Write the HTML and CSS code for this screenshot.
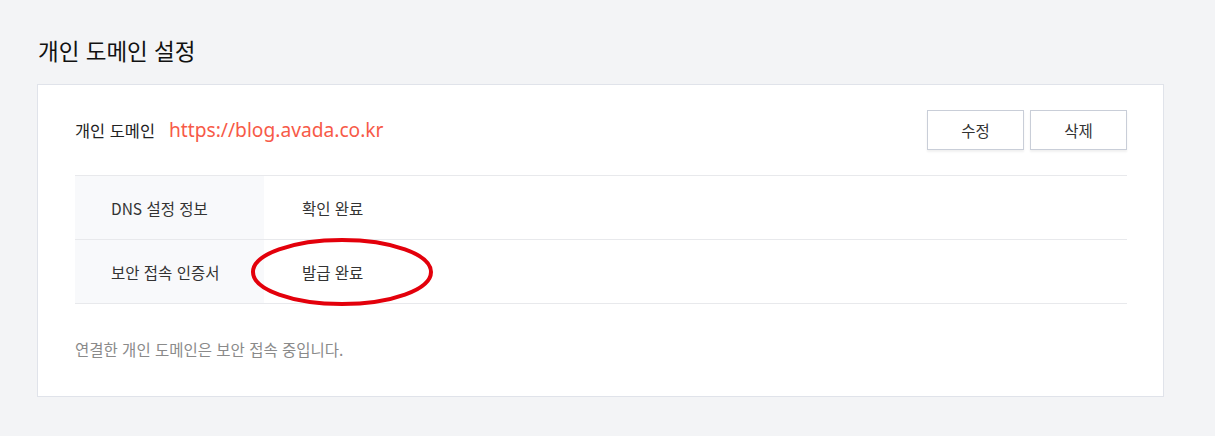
FILE: index.html
```html
<!DOCTYPE html>
<html lang="ko">
<head>
<meta charset="utf-8">
<link rel="stylesheet" href="styles.css">
</head>
<body>
<div class="page">
  <h1 class="title">개인 도메인 설정</h1>
  <section class="card">
    <div class="card-head">
      <div class="domain">
        <span class="domain-label">개인 도메인</span>
        <span class="domain-url">https://blog.avada.co.kr</span>
      </div>
      <div class="actions">
        <button class="btn">수정</button>
        <button class="btn">삭제</button>
      </div>
    </div>
    <div class="info">
      <div class="row">
        <div class="cell-label">DNS 설정 정보</div>
        <div class="cell-value">확인 완료</div>
      </div>
      <div class="row">
        <div class="cell-label">보안 접속 인증서</div>
        <div class="cell-value">
          <span class="marked">발급 완료
            <svg class="circle" width="186" height="72" viewBox="0 0 186 72"><ellipse cx="93" cy="36" rx="89" ry="32" fill="none" stroke="#e3000b" stroke-width="4"/></svg>
          </span>
        </div>
      </div>
    </div>
    <p class="note">연결한 개인 도메인은 보안 접속 중입니다.</p>
  </section>
</div>
</body>
</html>
```
FILE: styles.css
```css
* { box-sizing: border-box; }
html, body { margin: 0; padding: 0; }
body {
  background: #f3f4f6;
  font-family: "Noto Sans CJK KR", "Noto Sans", sans-serif;
  color: #222;
  width: 1215px;
  height: 436px;
  overflow: hidden;
}
.page { padding: 33px 51px 0 37px; }
.title {
  margin: 0 0 17px 1px;
  font-size: 22.5px;
  font-weight: 400;
  line-height: 34px;
  color: #111;
}
.card {
  background: #fff;
  border: 1px solid #e0e3ea;
  padding: 25px 36px 30px 37px;
  height: 313px;
}
.card-head {
  display: flex;
  justify-content: space-between;
  align-items: center;
  height: 40px;
  margin-bottom: 25px;
}
.domain { display: flex; align-items: center; gap: 14px; }
.domain-label { font-size: 16.4px; color: #222; }
.domain-url {
  font-family: "Noto Sans", "Inter", sans-serif;
  font-size: 19.2px;
  color: #f75a48;
  position: relative;
  top: -1px;
}
.actions { display: flex; gap: 6px; }
.btn {
  width: 97px;
  height: 40px;
  background: #fff;
  border: 1px solid #c9ced8;
  box-shadow: 0 2px 2px rgba(0,0,0,0.06);
  font-family: "Noto Sans CJK KR", sans-serif;
  font-size: 15.5px;
  color: #333;
  padding: 0;
}
.info { border-top: 1px solid #e8e9ec; }
.row {
  display: flex;
  height: 64px;
  border-bottom: 1px solid #e8e9ec;
}
.cell-label {
  width: 189px;
  background: #f8f9fb;
  padding-left: 36px;
  display: flex;
  align-items: center;
  font-size: 15.5px;
  color: #333;
}
.cell-value {
  padding-left: 38px;
  display: flex;
  align-items: center;
  font-size: 15.5px;
  color: #333;
}
.marked { position: relative; }
.circle {
  position: absolute;
  left: -53px;
  top: -25px;
}
.note {
  margin: 34px 0 0;
  font-size: 15.5px;
  color: #8a8a8a;
}
```
